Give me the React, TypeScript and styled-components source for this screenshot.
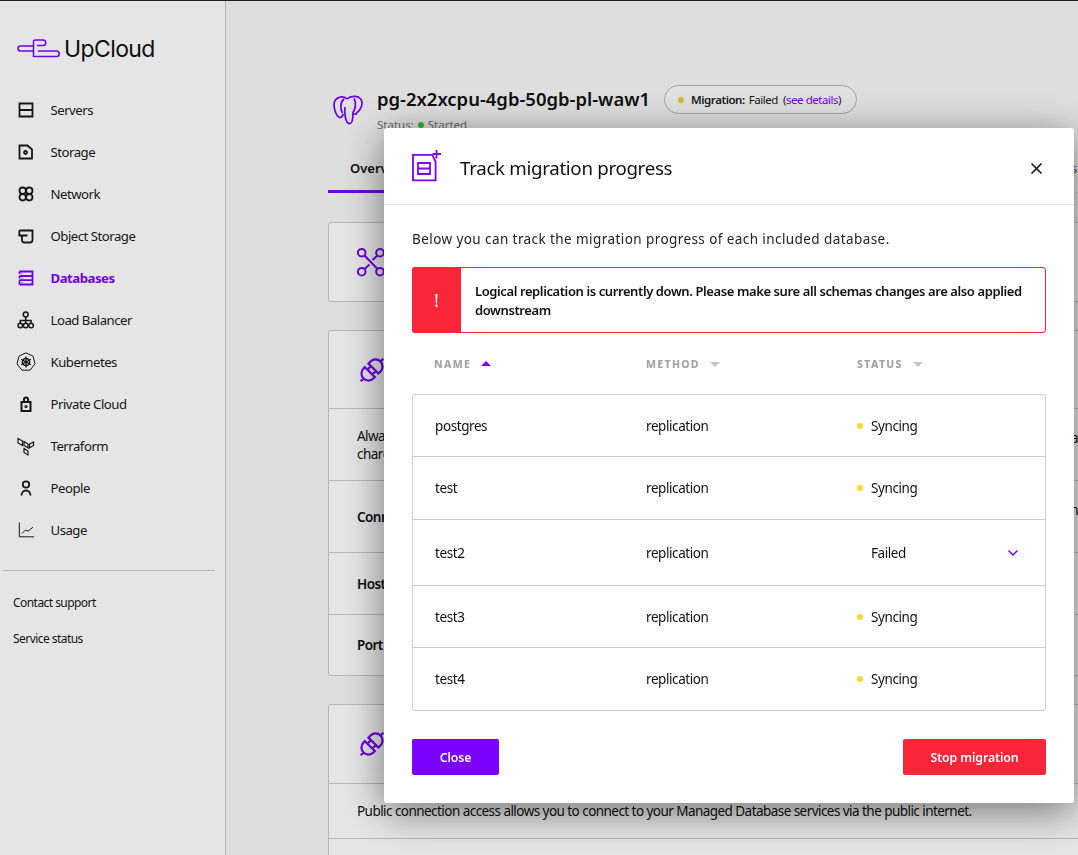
import styled, { createGlobalStyle } from "styled-components";
import type { ReactNode } from "react";

const FONT = `"Noto Sans", "Open Sans", sans-serif`;
const PURPLE = "#7b00ff";
const RED = "#f92538";

const Global = createGlobalStyle`
  html, body { margin: 0; padding: 0; height: 100%; overflow: hidden; }
  body { font-family: ${FONT}; color: #111; background: #f8f8f8; }
  * { box-sizing: border-box; }
`;

const Page = styled.div`
  display: flex;
  width: 100vw;
  height: 100vh;
  overflow: hidden;
  border-top: 1px solid #222;
`;

const Sidebar = styled.aside`
  flex: 0 0 226px;
  background: #fff;
  border-right: 1px solid #ccc;
  display: flex;
  flex-direction: column;
`;
const Logo = styled.div`
  display: flex;
  align-items: center;
  gap: 4px;
  height: 34px;
  margin: 31px 0 23px 17px;
  font-family: "Inter", sans-serif;
  font-size: 23px;
  letter-spacing: -0.6px;
  color: #111;
`;
const NavList = styled.nav`
  display: flex;
  flex-direction: column;
`;
const NavItem = styled.a<{ $active?: boolean }>`
  display: flex;
  align-items: center;
  height: 42px;
  padding-left: 14px;
  gap: 12.5px;
  font-size: 13.2px;
  letter-spacing: -0.5px;
  font-weight: ${(p) => (p.$active ? 700 : 400)};
  color: ${(p) => (p.$active ? PURPLE : "#1a1a1a")};
  svg {
    width: 24px;
    height: 24px;
    flex: none;
  }
`;
const SideRule = styled.div`
  height: 1px;
  background: #ccc;
  margin: 19px 10px 0 3px;
`;
const SideLink = styled.a`
  display: block;
  font-size: 12px;
  letter-spacing: -0.55px;
  color: #1a1a1a;
  padding-left: 13px;
  height: 36.5px;
  line-height: 17px;
  &:first-of-type {
    margin-top: 22.5px;
  }
`;

const Main = styled.main`
  flex: 1;
  min-width: 0;
  padding: 0 0 0 102px;
  background: #f8f8f8;
`;
const Content = styled.div`
  width: 800px;
`;
const Header = styled.header`
  display: flex;
  align-items: flex-start;
  height: 133px;
  padding-top: 84px;
`;
const HeaderIcon = styled.div`
  width: 49px;
  padding: 10px 0 0 5px;
  color: ${PURPLE};
`;
const TitleBlock = styled.div`
  display: flex;
  flex-direction: column;
`;
const Title = styled.h1`
  margin: 0;
  font-size: 18.45px;
  line-height: 27px;
  font-weight: 600;
`;
const Status = styled.div`
  display: flex;
  align-items: center;
  gap: 4px;
  margin-top: 5px;
  font-size: 11.5px;
  color: #777;
`;
const Dot = styled.span<{ $color: string }>`
  width: 6px;
  height: 6px;
  border-radius: 50%;
  background: ${(p) => p.$color};
  flex: none;
`;
const Pill = styled.div`
  display: flex;
  align-items: center;
  height: 29px;
  margin-left: 14px;
  padding: 0 15px 0 13px;
  border: 1px solid #b5b5b5;
  border-radius: 15px;
  background: #fafafa;
  font-size: 11.5px;
  letter-spacing: -0.45px;
  white-space: pre;
  color: #222;
  b {
    font-weight: 600;
    margin-left: 7px;
    margin-right: 4px;
  }
  a {
    color: ${PURPLE};
  }
`;
const Tabs = styled.div`
  display: flex;
  justify-content: space-between;
  height: 59px;
  padding-right: 51px;
  border-bottom: 1px solid #ddd;
`;
const Tab = styled.div<{ $active?: boolean }>`
  width: ${(p) => (p.$active ? "180px" : "auto")};
  height: 59px;
  padding: 25px 0 0 ${(p) => (p.$active ? "22px" : "0")};
  border-bottom: 3px solid ${(p) => (p.$active ? PURPLE : "transparent")};
  font-size: 13px;
  font-weight: ${(p) => (p.$active ? 600 : 400)};
  color: ${(p) => (p.$active ? "#111" : "#555")};
`;
const Card = styled.section<{ $top?: number }>`
  margin-top: ${(p) => p.$top ?? 28}px;
  border: 1px solid #ccc;
  border-radius: 3px;
  background: #fff;
`;
const CardRow = styled.div<{ $h: number }>`
  display: flex;
  align-items: center;
  height: ${(p) => p.$h}px;
  padding: 0 28px;
  font-size: 13.5px;
  letter-spacing: -0.55px;
  color: ${PURPLE};
  & + & {
    border-top: 1px solid #ccc;
  }
  b {
    color: #111;
    font-weight: 600;
  }
  span {
    color: #111;
    line-height: 18px;
  }
`;
const RowTail = styled.span`
  margin: 0 21px 14px auto;
`;

const Overlay = styled.div`
  position: fixed;
  inset: 0;
  padding: 128px 4px 52px 384px;
  background: rgba(0, 0, 0, 0.1);
`;
const Modal = styled.div`
  height: 675px;
  background: #fff;
  border-radius: 3px;
  box-shadow: 0 8px 40px rgba(0, 0, 0, 0.5);
  display: flex;
  flex-direction: column;
`;
const ModalHeader = styled.div`
  display: flex;
  align-items: center;
  height: 78px;
  padding: 0 28px;
  border-bottom: 1px solid #e4e4e4;
`;
const ModalTitle = styled.h2`
  flex: 1;
  margin: 2px 0 0 18px;
  font-size: 18.7px;
  font-weight: 400;
  letter-spacing: -0.3px;
  color: #111;
`;
const CloseIcon = styled.button`
  display: flex;
  padding: 0;
  border: 0;
  background: none;
  color: #111;
  margin: 5px 4px 0 0;
`;
const ModalBody = styled.div`
  flex: 1;
  padding: 25px 28px 28px;
  display: flex;
  flex-direction: column;
`;
const Intro = styled.p`
  margin: 0;
  height: 18px;
  font-size: 13.5px;
  line-height: 18px;
  letter-spacing: 0.42px;
  color: #222;
`;
const Alert = styled.div`
  display: flex;
  margin-top: 19px;
  height: 66px;
  border: 1px solid ${RED};
  border-radius: 3px;
`;
const AlertMark = styled.div`
  flex: 0 0 49px;
  margin: -1px 0 -1px -1px;
  background: ${RED};
  color: #fff;
  display: flex;
  align-items: center;
  justify-content: center;
  font-size: 18px;
  border-radius: 3px 0 0 3px;
`;
const AlertText = styled.div`
  padding: 14px 14px 0;
  font-size: 13px;
  line-height: 19px;
  font-weight: 600;
  letter-spacing: -0.4px;
  color: #111;
`;
const TableHead = styled.div`
  display: grid;
  grid-template-columns: 212px 211px 1fr;
  align-items: center;
  height: 61px;
  padding-left: 22px;
`;
const HeadCell = styled.div`
  display: flex;
  align-items: center;
  gap: 10px;
  font-size: 10.5px;
  font-weight: 800;
  letter-spacing: 1.3px;
  color: #a3a3a3;
`;
const Caret = styled.span<{ $up?: boolean }>`
  width: 0;
  height: 0;
  border-left: 5px solid transparent;
  border-right: 5px solid transparent;
  ${(p) =>
    p.$up
      ? `border-bottom: 5px solid ${PURPLE};`
      : `border-top: 5px solid #c4c4c4; margin-top: 2px;`}
`;
const Table = styled.div`
  border: 1px solid #ccc;
  border-radius: 3px;
`;
const TableRow = styled.div<{ $h: number }>`
  display: grid;
  grid-template-columns: 211px 211px 1fr;
  align-items: center;
  height: ${(p) => p.$h}px;
  padding-left: 22px;
  font-size: 13.5px;
  letter-spacing: -0.42px;
  color: #111;
  & + & {
    border-top: 1px solid #ccc;
  }
`;
const StatusCell = styled.div`
  display: flex;
  align-items: center;
  gap: 8px;
  padding-right: 26px;
`;
const FailedLabel = styled.span`
  flex: 1;
  padding-left: 14px;
`;
const Footer = styled.div`
  display: flex;
  justify-content: space-between;
  margin-top: 28px;
`;
const Button = styled.button<{ $color: string; $w: number }>`
  width: ${(p) => p.$w}px;
  height: 36px;
  border: 0;
  border-radius: 2px;
  background: ${(p) => p.$color};
  color: #fff;
  font-family: ${FONT};
  font-size: 12.3px;
  font-weight: 600;
  letter-spacing: -0.1px;
`;

function Svg({ children, width = 1.8 }: { children: ReactNode; width?: number }) {
  return (
    <svg viewBox="0 0 24 24" fill="none" stroke="currentColor" strokeWidth={width}>
      {children}
    </svg>
  );
}

const navItems: { label: string; icon: ReactNode; active?: boolean }[] = [
  {
    label: "Servers",
    icon: (
      <Svg>
        <path d="M5.5 5.5h13v13h-13zM5.5 12h13" />
      </Svg>
    ),
  },
  {
    label: "Storage",
    icon: (
      <Svg>
        <path d="M5.5 5.5h8l4.5 4v9H5.5z" />
        <circle cx="11.5" cy="12.5" r="1.5" />
      </Svg>
    ),
  },
  {
    label: "Network",
    icon: (
      <Svg>
        <circle cx="8.7" cy="8.7" r="3.2" />
        <circle cx="15.3" cy="8.7" r="3.2" />
        <circle cx="8.7" cy="15.3" r="3.2" />
        <circle cx="15.3" cy="15.3" r="3.2" />
      </Svg>
    ),
  },
  {
    label: "Object Storage",
    icon: (
      <Svg>
        <path d="M5.3 6.5H18.5V16a2.5 2.5 0 0 1-2.5 2.5H10.5A2.5 2.5 0 0 1 8 16v-4.5" />
        <path d="M5.3 6.5v5h8.200" />
      </Svg>
    ),
  },
  {
    label: "Databases",
    active: true,
    icon: (
      <Svg>
        <path d="M5.5 5.5H18.5V18.5H5.5M5.5 10H18.5M5.5 14.2H18.5" />
        <path d="M5.5 5.5v2.500M5.500 10v2.500M5.500 14.500v4" />
        <path strokeWidth={1.200} d="M8 7.500v.800M8 11.700v.800M8 16v.800" />
      </Svg>
    ),
  },
  {
    label: "Load Balancer",
    icon: (
      <Svg width={1.5}>
        <circle cx="11.7" cy="6.5" r="2.4" />
        <circle cx="6.3" cy="17.5" r="2.3" />
        <circle cx="11.7" cy="17.5" r="2.3" />
        <circle cx="17.1" cy="17.5" r="2.3" />
        <path d="M11.7 8.900v6.300M6.300 15.200v-2.700h10.800v2.700" />
      </Svg>
    ),
  },
  {
    label: "Kubernetes",
    icon: (
      <Svg width={1}>
        <path d="M12 2.800l7 3.300 2 7.800-5 6.300H8l-5-6.300 2-7.800z" />
        <circle cx="12" cy="12" r="3.600" strokeWidth={1.500} />
        <path strokeWidth={1.300} d="M12 6.500v11M7.200 9.200l9.600 5.600M16.800 9.200l-9.600 5.600" />
      </Svg>
    ),
  },
  {
    label: "Private Cloud",
    icon: (
      <Svg width={2}>
        <path d="M7.500 10h9v9h-9zM10 10V7.500a2 2 0 0 1 4 0V10" />
        <circle cx="12" cy="14.500" r="0.600" />
      </Svg>
    ),
  },
  {
    label: "Terraform",
    icon: (
      <Svg width={1.200}>
        <path d="M4 4.500l4.500 2.500v4.500L4 9zM10 7.500l4 2.500v4l-4-2.500zM10 14.500l4 2.500v4l-4-2.500zM19.500 8l-4 2v4l4-2.500z" />
      </Svg>
    ),
  },
  {
    label: "People",
    icon: (
      <Svg>
        <circle cx="12" cy="8.500" r="3.200" />
        <path d="M7.500 19.500c0-3 2-5 4.500-5s4.500 2 4.500 5" />
      </Svg>
    ),
  },
  {
    label: "Usage",
    icon: (
      <Svg width={1}>
        <path d="M5.300 4.500v14.300H20" />
        <path d="M8 15.500l3.500-3.500 2.500 1.200 5-4" />
      </Svg>
    ),
  },
];

const plug = (
  <svg width="30" height="30" viewBox="0 0 30 30" fill="none" stroke={PURPLE} strokeWidth="2.200">
    <g transform="rotate(-45 15 15)">
      <path d="M-1 15h4M12 8v14H10a7 7 0 0 1 0-14zM12 11.500h4.500M12 18.500h4.500" />
      <path d="M17 8v14h3a7 7 0 0 0 0-14zM27 15h4" />
    </g>
  </svg>
);

const rows = [
  { name: "postgres", h: 61, failed: false },
  { name: "test", h: 63, failed: false },
  { name: "test2", h: 66, failed: true },
  { name: "test3", h: 62, failed: false },
  { name: "test4", h: 63, failed: false },
];

export default function App() {
  return (
    <>
      <Global />
      <Page>
        <Sidebar>
          <Logo>
            <svg width="43" height="20" viewBox="0 0 43 20" fill="none" stroke={PURPLE} strokeWidth="1.500">
              <path d="M16 7H3.500a2.500 2.500 0 0 0 0 5H16" />
              <path d="M16.500 18V3a2 2 0 0 1 2-2H26a2.700 2.700 0 0 1 0 5.500H20" />
              <path d="M21 12h18.500a2.700 2.700 0 0 1 0 5.500H17" />
            </svg>
            UpCloud
          </Logo>
          <NavList>
            {navItems.map((item) => (
              <NavItem key={item.label} $active={item.active}>
                {item.icon}
                {item.label}
              </NavItem>
            ))}
          </NavList>
          <SideRule />
          <SideLink>Contact support</SideLink>
          <SideLink>Service status</SideLink>
        </Sidebar>
        <Main>
          <Content>
            <Header>
              <HeaderIcon>
                <svg width="30" height="30" viewBox="0 0 30 30" fill="none" stroke="currentColor" strokeWidth="1.700">
                  <path d="M14 4C11 1 4 1 1.500 6.500 0 12 3 21 6.500 22.500c2 .5 3-1.500 4-3.500" />
                  <path d="M14 4c3-3 11-4 14 .5 2.500 4 0 11-5 14" />
                  <path d="M11 4C7 7 7 14 9.500 18M12 12c-.5 5 0 11 2 15 1.500 2.500 4 2 5-.5 1-3 1-6 1-9 2-3 4-9 1-14" />
                  <path d="M20 19l4 0" />
                </svg>
              </HeaderIcon>
              <TitleBlock>
                <Title>pg-2x2xcpu-4gb-50gb-pl-waw1</Title>
                <Status>
                  Status: <Dot $color="#3ec43e" /> Started
                </Status>
              </TitleBlock>
              <Pill>
                <Dot $color="#f3cc2a" />
                <b>Migration:</b>Failed  (<a>see details</a>)
              </Pill>
            </Header>
            <Tabs>
              <Tab $active>Overview</Tab>
              <Tab>Logs</Tab>
            </Tabs>
            <Card $top={29}>
              <CardRow $h={78}>
                <svg width="30" height="30" viewBox="0 0 30 30" fill="none" stroke={PURPLE} strokeWidth="2">
                  <circle cx="4.700" cy="5.700" r="3.800" />
                  <circle cx="23" cy="5.700" r="3.800" />
                  <circle cx="4.700" cy="24.700" r="3.800" />
                  <circle cx="23" cy="24.700" r="3.800" />
                  <path d="M7.500 8.500l13 13.500M20.500 8.500l-5 4.500M7.500 22l5-4.500" />
                </svg>
              </CardRow>
            </Card>
            <Card>
              <CardRow $h={77}>{plug}</CardRow>
              <CardRow $h={72}>
                <span>
                  Always
                  <br />
                  charges
                </span>
                <RowTail>data</RowTail>
              </CardRow>
              <CardRow $h={72}>
                <b>Connection</b>
                <RowTail>form</RowTail>
              </CardRow>
              <CardRow $h={62}>
                <b>Host</b>
              </CardRow>
              <CardRow $h={61}>
                <b>Port</b>
              </CardRow>
            </Card>
            <Card>
              <CardRow $h={78}>{plug}</CardRow>
              <CardRow $h={55}>
                <span>Public connection access allows you to connect to your Managed Database services via the public internet.</span>
              </CardRow>
              <CardRow $h={55} />
            </Card>
          </Content>
        </Main>
        <Overlay>
          <Modal>
            <ModalHeader>
              <svg width="30" height="32" viewBox="0 0 30 32" fill="none" stroke={PURPLE} strokeWidth="1.800">
                <path d="M20.300 4.800H1V30.400H23.600V11.500L20.300 4.800" />
                <path d="M6 13h12v11H6zM6 18.500h12" />
                <path d="M24.500 0v8.500M20.500 4H29" />
              </svg>
              <ModalTitle>Track migration progress</ModalTitle>
              <CloseIcon>
                <svg width="11" height="11" viewBox="0 0 11 11" fill="none" stroke="currentColor" strokeWidth="1.500">
                  <path d="M.5.500l10 10M10.500.500l-10 10" />
                </svg>
              </CloseIcon>
            </ModalHeader>
            <ModalBody>
              <Intro>Below you can track the migration progress of each included database.</Intro>
              <Alert>
                <AlertMark>!</AlertMark>
                <AlertText>
                  Logical replication is currently down. Please make sure all schemas changes are also applied downstream
                </AlertText>
              </Alert>
              <TableHead>
                <HeadCell>
                  NAME <Caret $up />
                </HeadCell>
                <HeadCell>
                  METHOD <Caret />
                </HeadCell>
                <HeadCell>
                  STATUS <Caret />
                </HeadCell>
              </TableHead>
              <Table>
                {rows.map((r) => (
                  <TableRow key={r.name} $h={r.h}>
                    <span>{r.name}</span>
                    <span>replication</span>
                    <StatusCell>
                      {r.failed ? (
                        <>
                          <FailedLabel>Failed</FailedLabel>
                          <svg width="12" height="8" viewBox="0 0 12 8" fill="none" stroke={PURPLE} strokeWidth="1.500">
                            <path d="M1.500 1.500L6 6l4.500-4.500" />
                          </svg>
                        </>
                      ) : (
                        <>
                          <Dot $color="#ffd92b" />
                          Syncing
                        </>
                      )}
                    </StatusCell>
                  </TableRow>
                ))}
              </Table>
              <Footer>
                <Button $color={PURPLE} $w={87}>Close</Button>
                <Button $color={RED} $w={143}>Stop migration</Button>
              </Footer>
            </ModalBody>
          </Modal>
        </Overlay>
      </Page>
    </>
  );
}
